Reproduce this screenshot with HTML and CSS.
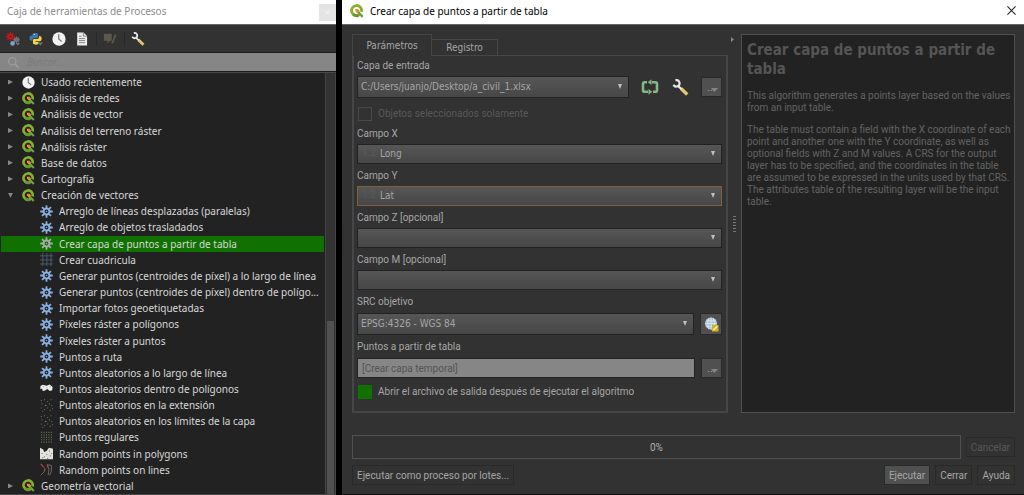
FILE: index.html
```
<!DOCTYPE html>
<html lang="es">
<head>
<meta charset="utf-8">
<title>Crear capa de puntos a partir de tabla</title>
<link rel="stylesheet" href="styles.css">
</head>
<body>
<svg class="sprite" aria-hidden="true">
  <defs>
    <symbol id="qgis" viewBox="0 0 16 16">
      <path d="M11.800 11.200A5.700 5.700 0 1 1 13 9" fill="none" stroke="#86b02e" stroke-width="3.200"/>
      <path d="M3.700 11.700A5.700 5.700 0 0 0 9.500 13.300" fill="none" stroke="#5f9a33" stroke-width="3.200"/>
      <path d="M8.500 8.500l6 6.300" stroke="#6ba23a" stroke-width="2.800"/>
      <path d="M5.800 5.800h3.400l2 2.200-2.400 2.400-2.600-2z" fill="#f08a2c"/>
    </symbol>
    <symbol id="gear" viewBox="0 0 16 16">
      <path d="M8 .3v4.200M8 11.500v4.200M.3 8h4.200M11.500 8h4.200M2.500 2.500l3 3M10.500 10.500l3 3M13.500 2.500l-3 3M5.500 10.500l-3 3" stroke="currentColor" stroke-width="2.200"/>
      <circle cx="8" cy="8" r="3.700" fill="none" stroke="currentColor" stroke-width="2.600"/>
      <circle cx="8" cy="8" r="1" fill="currentColor"/>
    </symbol>
    <symbol id="clock" viewBox="0 0 16 16">
      <circle cx="8" cy="8" r="7.600" fill="#f2f2f2"/><path d="M7.700 2.500V8l3.500 3" fill="none" stroke="#777" stroke-width="1.400"/>
    </symbol>
    <symbol id="grid" viewBox="0 0 16 16">
      <path d="M3.500 0v16M8.500 0v16M13.500 0v16M0 3.500h16M0 8.500h16M0 13.500h16" stroke="#50637a" fill="none"/>
    </symbol>
    <symbol id="regular" viewBox="0 0 16 16">
      <path d="M2 1v14M5 1v14M8 1v14M11 1v14M14 1v14" stroke="#66745f" stroke-width="1.300" stroke-dasharray="1.500 1.500"/>
    </symbol>
    <symbol id="random" viewBox="0 0 16 16">
      <path d="M1 2h1M5 1h1M9 3h1M13 1h1M2 6h1M6 8h2M11 6h1M14 8h1M1 11h1M5 13h1M9 11h1M12 14h1M3 15h1M15 12h1" stroke="#758070" stroke-width="1.300"/>
    </symbol>
    <symbol id="cloud" viewBox="0 0 16 16">
      <path d="M.5 5l3-1.500L8 4.500l4-1.500 3.500 3-.5 4-3 1-3-2.500-4 2.500-2-.5L2.500 8 .5 9z" fill="#ecece8"/><path d="M4 6h1M8 7h1M12 6h1" stroke="#777"/>
    </symbol>
    <symbol id="polygon" viewBox="0 0 16 16">
      <path d="M0 1l4 2 1 3 3-1 3-4 5 1v13H0z" fill="#e2e3df"/><path d="M2 8h1M5 12h1M8 9h1M11 5h1M12 11h1M3 13h1M9 14h1M14 8h1" stroke="#5c6259" stroke-width="1.500"/>
    </symbol>
    <symbol id="lines" viewBox="0 0 16 16">
      <path d="M1 1l5 6-1 4-4 4M9 2l2 6-1 7M9 2l5 1v7l-2 5" stroke="#777" fill="none"/><path d="M1 1l3 3.500M9 2l1 4" stroke="#bd4141" stroke-width="1.300" fill="none"/><path d="M6 7v3M14 6v3M3 13l-2 2" stroke="#a04444"/>
    </symbol>
    <symbol id="wrench" viewBox="0 0 16 16">
      <path d="M8.500 9l5.800 5.500" stroke="#e2c66a" stroke-width="3.200"/>
      <path d="M5.500 6.500l3.500 3" stroke="#e8e8e8" stroke-width="2"/>
      <path d="M3.200 1.200a3 3 0 1 1-1.800 4.200" fill="none" stroke="#e8e8e8" stroke-width="2"/>
    </symbol>
    <symbol id="models" viewBox="0 0 16 16">
      <path d="M5 0v10M0 5h10M1.500 1.500l7 7M8.500 1.500l-7 7" stroke="#c5161c" stroke-width="1.600"/><circle cx="5" cy="5" r="3.300" fill="#c5161c"/><circle cx="5" cy="5" r="1" fill="#642022"/>
      <path d="M12 5v8M8 9h8M9.200 6.200l5.600 5.600M14.800 6.200l-5.600 5.600" stroke="#707274" stroke-width="1.200"/><circle cx="12" cy="9" r="2" fill="none" stroke="#707274" stroke-width="1.600"/>
      <circle cx="7.500" cy="13" r="2.600" fill="#7f9fcb"/><path d="M11 12.500h5L13.500 15.500z" fill="#777"/>
    </symbol>
    <symbol id="python" viewBox="0 0 16 16">
      <path d="M4 4V2.500Q4 1 7 1t3.500 1.500v3Q10.500 7 9 7H5.500Q4 7 4 9v1H2.500Q.5 10 .5 7t2-3h5" fill="#3c78aa"/>
      <path d="M11.500 4.500h1q2 0 2 3t-2 3h-5v.8h3.500v1.500q0 1.700-3 1.700t-3.500-1.700V9.500Q4.500 8 6 8h3.500Q11.500 8 11.500 6z" fill="#f6d246"/>
      <circle cx="6" cy="2.700" r=".7" fill="#fff"/><path d="M10 12h6l-3 3.500z" fill="#777"/>
    </symbol>
    <symbol id="document" viewBox="0 0 16 16">
      <path d="M2.500.5h7.300l4 4v11H2.500z" fill="#eee"/><path d="M9.500.5v4.300h4M4.500 7.500h7M4.500 9.800h7M4.500 12.200h7M4.500 4.800h3" stroke="#777" fill="none"/>
    </symbol>
    <symbol id="edit" viewBox="0 0 16 16">
      <path d="M1 2h9v8H8l-3 3v-3H1z" fill="#5d584c"/><path d="M14.500 3l-4 10" stroke="#5d584c" stroke-width="2"/>
    </symbol>
    <symbol id="cycle" viewBox="0 0 18 16">
      <path d="M6 3.200H3.500Q2 3.200 2 5v6q0 1.800 1.500 1.800H7M12 12.800h2.500q1.500 0 1.500-1.800V5q0-1.800-1.500-1.800H11" fill="none" stroke="#82b884" stroke-width="2.600"/>
      <path d="M10.500.3v5.800L6.800 3.200zM7.500 9.900v5.800l3.700-2.900z" fill="#82b884"/>
    </symbol>
    <symbol id="globe" viewBox="0 0 16 16">
      <circle cx="7.500" cy="7" r="6.500" fill="#a9c5da"/><path d="M1.500 7h12M2.500 4h10M2.500 10h10M7.500.5v13M5 1Q2.500 7 5 13M10 1q2.500 6 0 12" fill="none" stroke="#e4e8e9" stroke-width=".8"/>
      <path d="M8.500 8.500h7v7h-7z" fill="#d7b31c"/><path d="M10 14l4-4" stroke="#fff8cf" stroke-width="1.500"/>
    </symbol>
    <symbol id="search" viewBox="0 0 16 16">
      <circle cx="6.500" cy="6.500" r="4.500" fill="none" stroke="#9b9b9b" stroke-width="1.500"/><path d="M10 10l5 5" stroke="#9b9b9b" stroke-width="1.800"/>
    </symbol>
    <symbol id="close" viewBox="0 0 10 10"><path d="M.5.5l9 9M9.500.5l-9 9" stroke="currentColor" stroke-width="1.200" fill="none"/></symbol>
  </defs>
</svg>
<div class="desktop">
  <section class="toolbox">
    <header class="titlebar toolbox-title">
      <h2 class="title">Caja de herramientas de Procesos</h2>
      <button class="dock-close" aria-label="Cerrar panel"><svg class="tiny"><use href="#close"/></svg></button>
    </header>
    <div class="toolbar">
      <button class="tool" aria-label="Modelos"><svg class="icon"><use href="#models"/></svg></button>
      <button class="tool" aria-label="Scripts"><svg class="icon"><use href="#python"/></svg></button>
      <button class="tool" aria-label="Historial"><svg class="icon"><use href="#clock"/></svg></button>
      <button class="tool" aria-label="Resultados"><svg class="icon"><use href="#document"/></svg></button>
      <button class="tool divided" aria-label="Editar" disabled><svg class="icon"><use href="#edit"/></svg></button>
      <button class="tool divided" aria-label="Opciones"><svg class="icon"><use href="#wrench"/></svg></button>
    </div>
    <label class="search"><svg class="icon"><use href="#search"/></svg><input class="search-input" type="search" placeholder="Buscar…" aria-label="Buscar"></label>
    <div class="tree-area">
      <ul class="tree">
        <li class="row"><span class="twist"></span><svg class="icon"><use href="#clock"/></svg>Usado recientemente</li>
        <li class="row"><span class="twist"></span><svg class="icon"><use href="#qgis"/></svg>Análisis de redes</li>
        <li class="row"><span class="twist"></span><svg class="icon"><use href="#qgis"/></svg>Análisis de vector</li>
        <li class="row"><span class="twist"></span><svg class="icon"><use href="#qgis"/></svg>Análisis del terreno ráster</li>
        <li class="row"><span class="twist"></span><svg class="icon"><use href="#qgis"/></svg>Análisis ráster</li>
        <li class="row"><span class="twist"></span><svg class="icon"><use href="#qgis"/></svg>Base de datos</li>
        <li class="row"><span class="twist"></span><svg class="icon"><use href="#qgis"/></svg>Cartografía</li>
        <li class="row"><span class="twist open"></span><svg class="icon"><use href="#qgis"/></svg>Creación de vectores</li>
        <li class="row child"><svg class="icon"><use href="#gear"/></svg>Arreglo de líneas desplazadas (paralelas)</li>
        <li class="row child"><svg class="icon"><use href="#gear"/></svg>Arreglo de objetos trasladados</li>
        <li class="row child selected"><svg class="icon"><use href="#gear"/></svg>Crear capa de puntos a partir de tabla</li>
        <li class="row child"><svg class="icon"><use href="#grid"/></svg>Crear cuadricula</li>
        <li class="row child"><svg class="icon"><use href="#gear"/></svg>Generar puntos (centroides de píxel) a lo largo de línea</li>
        <li class="row child"><svg class="icon"><use href="#gear"/></svg>Generar puntos (centroides de píxel) dentro de polígo...</li>
        <li class="row child"><svg class="icon"><use href="#gear"/></svg>Importar fotos geoetiquetadas</li>
        <li class="row child"><svg class="icon"><use href="#gear"/></svg>Píxeles ráster a polígonos</li>
        <li class="row child"><svg class="icon"><use href="#gear"/></svg>Píxeles ráster a puntos</li>
        <li class="row child"><svg class="icon"><use href="#gear"/></svg>Puntos a ruta</li>
        <li class="row child"><svg class="icon"><use href="#gear"/></svg>Puntos aleatorios a lo largo de línea</li>
        <li class="row child"><svg class="icon"><use href="#cloud"/></svg>Puntos aleatorios dentro de polígonos</li>
        <li class="row child"><svg class="icon"><use href="#random"/></svg>Puntos aleatorios en la extensión</li>
        <li class="row child"><svg class="icon"><use href="#random"/></svg>Puntos aleatorios en los límites de la capa</li>
        <li class="row child"><svg class="icon"><use href="#regular"/></svg>Puntos regulares</li>
        <li class="row child"><svg class="icon"><use href="#polygon"/></svg>Random points in polygons</li>
        <li class="row child"><svg class="icon"><use href="#lines"/></svg>Random points on lines</li>
        <li class="row"><span class="twist"></span><svg class="icon"><use href="#qgis"/></svg>Geometría vectorial</li>
      </ul>
      <div class="scrollbar"><div class="thumb"></div></div>
    </div>
  </section>

  <section class="dialog">
    <header class="titlebar">
      <svg class="logo"><use href="#qgis"/></svg>
      <h1 class="title">Crear capa de puntos a partir de tabla</h1>
      <button class="window-close" aria-label="Cerrar ventana"><svg class="close-icon"><use href="#close"/></svg></button>
    </header>
    <div class="dialog-body">
      <div class="split">
        <div class="params">
          <div class="tabs" role="tablist">
            <button class="tab active" role="tab" aria-selected="true">Parámetros</button>
            <button class="tab" role="tab" aria-selected="false">Registro</button>
          </div>
          <form class="pane">
            <label class="label" for="source">Capa de entrada</label>
            <div class="line source-line">
              <div class="combo tall"><select class="select" id="source"><option>C:/Users/juanjo/Desktop/a_civil_1.xlsx</option></select></div>
              <button type="button" class="flat" aria-label="Iterar"><svg class="cycle-icon"><use href="#cycle"/></svg></button>
              <button type="button" class="flat" aria-label="Opciones avanzadas"><svg class="wrench-icon"><use href="#wrench"/></svg></button>
              <button type="button" class="more">...</button>
            </div>
            <label class="check muted"><input class="box" type="checkbox" disabled>Objetos seleccionados solamente</label>
            <label class="label" for="x">Campo X</label>
            <div class="combo typed"><span class="type">1.2</span><select class="select" id="x"><option>Long</option></select></div>
            <label class="label" for="y">Campo Y</label>
            <div class="combo typed focus"><span class="type">1.2</span><select class="select" id="y"><option>Lat</option></select></div>
            <label class="label" for="z">Campo Z [opcional]</label>
            <div class="combo"><select class="select" id="z"><option></option></select></div>
            <label class="label" for="m">Campo M [opcional]</label>
            <div class="combo"><select class="select" id="m"><option></option></select></div>
            <label class="label" for="crs">SRC objetivo</label>
            <div class="line">
              <div class="combo tall"><select class="select" id="crs"><option>EPSG:4326 - WGS 84</option></select></div>
              <button type="button" class="more crs" aria-label="Seleccionar SRC"><svg class="globe-icon"><use href="#globe"/></svg></button>
            </div>
            <label class="label" for="out">Puntos a partir de tabla</label>
            <div class="line">
              <input class="output" id="out" type="text" placeholder="[Crear capa temporal]">
              <button type="button" class="more">...</button>
            </div>
            <label class="check last"><input class="box" type="checkbox" checked>Abrir el archivo de salida después de ejecutar el algoritmo</label>
          </form>
        </div>
        <div class="splitter"><span class="collapse"></span><span class="grip"></span></div>
        <article class="help">
          <h2 class="help-title">Crear capa de puntos a partir de tabla</h2>
          <p class="help-text">This algorithm generates a points layer based on the values from an input table.</p>
          <p class="help-text">The table must contain a field with the X coordinate of each point and another one with the Y coordinate, as well as optional fields with Z and M values. A CRS for the output layer has to be specified, and the coordinates in the table are assumed to be expressed in the units used by that CRS. The attributes table of the resulting layer will be the input table.</p>
        </article>
      </div>
      <div class="progress-line">
        <div class="progress" role="progressbar" aria-valuenow="0">0%</div>
        <button class="button" disabled>Cancelar</button>
      </div>
      <footer class="actions">
        <button class="button batch">Ejecutar como proceso por lotes...</button>
        <button class="button primary">Ejecutar</button>
        <button class="button">Cerrar</button>
        <button class="button">Ayuda</button>
      </footer>
    </div>
  </section>
</div>
</body>
</html>
```
FILE: styles.css
```
* { box-sizing: border-box; }
body { margin: 0; background: #000; }
button, input, select { font: inherit; color: inherit; margin: 0; }
button { padding: 0; border: 0; background: none; }
h1, h2, p, ul { margin: 0; padding: 0; }
.sprite { position: absolute; width: 0; height: 0; }

.desktop {
  display: grid;
  grid-template-columns: minmax(0, 336fr) minmax(0, 682fr);
  gap: 6px;
  min-height: 100vh;
}
.titlebar { display: flex; align-items: center; height: 24px; background: #fff; color: #222; }
.title { flex: 1; font-size: 10px; font-weight: 400; line-height: 16px; }

/* Toolbox */
.toolbox {
  display: flex;
  flex-direction: column;
  background: #323232;
  color: #d8d8d8;
  font-family: "Noto Sans", sans-serif;
  font-size: 10px;
}
.toolbox-title { padding-left: 7px; color: #8c8c8c; }
.toolbox-title .title { padding-bottom: 2px; }
.dock-close { width: 17px; height: 17px; background: #e4e4e4; color: #fff; }
.tiny { width: 5px; height: 5px; display: block; margin: auto; }
.icon { width: 13px; height: 13px; flex: none; display: block; }
.toolbar { display: flex; align-items: center; gap: 9px; height: 28px; padding-left: 6px; border-top: 1px solid #666; }
.tool .icon { width: 14px; height: 14px; }
.divided { margin-left: -2px; padding-left: 6px; border-left: 1px solid #292929; }
.search {
  display: flex;
  align-items: center;
  gap: 7px;
  height: 20px;
  padding-left: 7px;
  background: #868686;
  border: 1px solid #1c1c1c;
  border-width: 1px 0;
}
.search-input { flex: 1; min-width: 0; padding: 0; border: 0; outline: 0; background: none; font-style: italic; }
.search-input::placeholder { color: #7b7b7b; }
.tree-area { flex: 1; display: flex; background: #222; border-top: 1px solid #484848; border-bottom: 1px solid #484848; }
.tree {
  flex: 1;
  min-width: 0;
  display: grid;
  grid-template-columns: minmax(0, 1fr);
  grid-template-rows: repeat(26, minmax(16px, 1fr));
  list-style: none;
  padding-top: 1px;
}
.row {
  display: flex;
  align-items: center;
  gap: 6px;
  padding-left: 7px;
  margin: 0 1px;
  overflow: hidden;
  white-space: nowrap;
  line-height: 16px;
}
.child { padding-left: 39px; }
.child .icon { color: #86aede; }
.selected { background: #107000; }
.selected .icon { color: #a9a9a9; }
.twist { width: 5px; height: 5px; margin-right: 3px; background: #888; clip-path: polygon(0 0, 100% 50%, 0 100%); }
.open { clip-path: polygon(0 0, 100% 0, 50% 100%); }
.scrollbar { width: 11px; padding: 0 1px; background: #323232; border-left: 1px solid #444; border-right: 1px solid #444; display: flex; align-items: flex-end; }
.thumb { width: 100%; height: 41%; background: #505050; }

/* Dialog */
.dialog {
  display: flex;
  flex-direction: column;
  background: #323232;
  color: #a6a6a6;
  font-family: Roboto, sans-serif;
  font-size: 10px;
}
.dialog .titlebar { gap: 6px; padding: 0 8px; font-family: "Noto Sans", sans-serif; }
.dialog .title { padding-bottom: 3px; color: #000; }
.logo { width: 14px; height: 14px; margin-bottom: 3px; }
.close-icon { width: 9px; height: 9px; display: block; margin-bottom: 3px; color: #222; }
.dialog-body {
  flex: 1;
  display: flex;
  flex-direction: column;
  padding: 9px 9px 9px 10px;
  border-top: 1px solid #666;
  border-bottom: 1px solid #111;
}
.split { flex: 1; display: grid; grid-template-columns: minmax(0, 376fr) 13px minmax(0, 274fr); }
.params { display: flex; flex-direction: column; }
.tabs { display: flex; align-items: flex-end; height: 22px; margin-bottom: -1px; }
.tab, .select, .help-title { font-family: "DejaVu Sans Condensed", "DejaVu Sans", sans-serif; font-stretch: condensed; }
.tab { width: 66px; height: 17px; border: 1px solid #464646; border-left: 0; }
.active { position: relative; width: 80px; height: 22px; border-left: 1px solid #464646; border-bottom: 0; background: #323232; }
.pane { flex: 1; padding: 1px 4px 1px 3px; border: 1px solid #464646; border-width: 1px 2px 2px; }
.label { display: block; line-height: 17px; margin: 3px 0 2px; }
.label:first-child { margin-top: 0; }
.line { display: flex; align-items: center; gap: 6px; margin-top: 3px; }
.source-line { gap: 10px; margin-top: 2px; }
.combo { position: relative; flex: 1; height: 20px; border: 1px solid #222; background: linear-gradient(#565656, #474747); }
.tall { height: 22px; }
.combo::after {
  content: "";
  position: absolute;
  right: 6px;
  top: 50%;
  width: 4px;
  height: 5px;
  margin-top: -3px;
  background: #c0c0c0;
  clip-path: polygon(0 0, 100% 0, 50% 100%);
}
.select { appearance: none; display: block; width: 100%; height: 100%; padding: 0 16px 0 3px; border: 0; outline: 0; background: none; line-height: 16px; }
.typed .select { padding-left: 22px; }
.type { position: absolute; left: 4px; top: 2px; color: #5a5a5a; }
.focus { border-color: #80603c; }
.flat { width: 21px; height: 20px; }
.cycle-icon { width: 18px; height: 16px; display: block; margin: auto; }
.wrench-icon { width: 17px; height: 17px; display: block; margin: auto; }
.more { position: relative; flex: none; width: 21px; height: 20px; border: 1px solid #292929; background: #505050; }
.more:not(.crs)::after { content: ""; position: absolute; right: 3px; bottom: 4px; width: 7px; height: 4px; background: #858585; clip-path: polygon(0 0, 100% 0, 50% 100%); }
.crs { width: 22px; height: 22px; }
.globe-icon { width: 15px; height: 15px; display: block; margin: auto; }
.check { display: flex; align-items: center; gap: 6px; margin: 8px 0 4px 1px; line-height: 15px; }
.box { appearance: none; width: 14px; height: 14px; border: 1px solid #484848; }
.box:checked { background: #107000; border-color: #107000; }
.muted { color: #585858; }
.last { margin: 6px 0 0 1px; }
.output { flex: 1; min-width: 0; height: 20px; padding: 0 4px; border: 1px solid #222; background: #868686; color: #333; outline: 0; }
.output::placeholder { color: #555; }

.splitter { position: relative; }
.collapse { position: absolute; left: 3px; top: 3px; width: 3px; height: 5px; background: #888; clip-path: polygon(0 0, 100% 50%, 0 100%); }
.grip { position: absolute; left: 5px; top: 48%; width: 3px; height: 16px; background: repeating-linear-gradient(#777 0 1px, transparent 1px 3px); }

.help { padding: 6px 3px 6px 5px; border: 1px solid #505050; background: #222; color: #626262; }
.help-title { margin-bottom: 11px; font-size: 15px; line-height: 19px; color: #555; }
.help-text { margin-bottom: 10px; line-height: 12px; }

.progress-line { display: flex; align-items: center; gap: 5px; margin-top: 22px; }
.progress { flex: 1; height: 24px; line-height: 23px; text-align: center; border: 1px solid #505050; color: #b0b0b0; }
.button { height: 20px; padding: 0 4px; border: 1px solid #292929; white-space: nowrap; }
.button:disabled { color: #585858; }
.actions { display: flex; gap: 5px; margin-top: 6px; }
.batch { margin-right: auto; }
.primary { background: #505050; }
```
